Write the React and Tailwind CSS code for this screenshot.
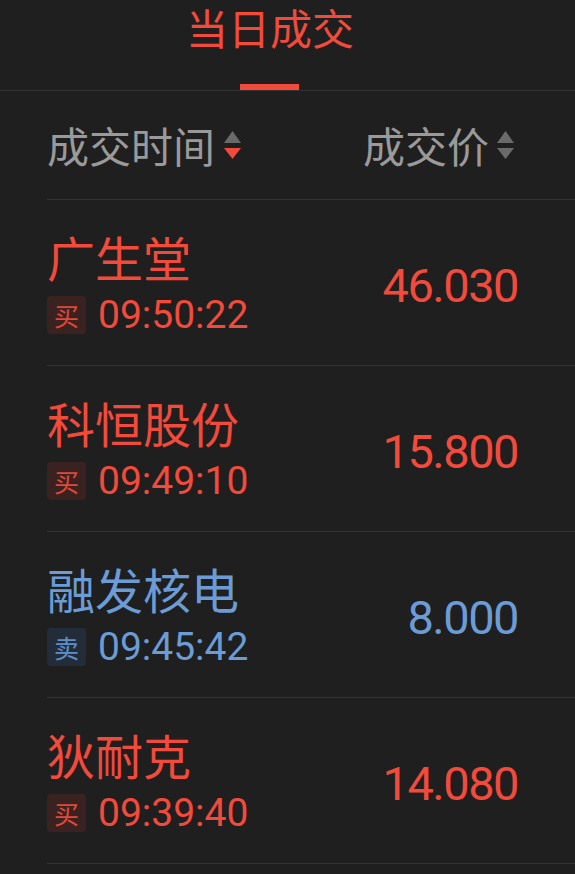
import React from "react";

const CJK = { fontFamily: '"Noto Sans CJK SC", "Noto Sans", sans-serif' };
const NUM = { fontFamily: 'Roboto, "Noto Sans", sans-serif' };

const rows = [
  { name: "广生堂", side: "买", time: "09:50:22", price: "46.030", up: true },
  { name: "科恒股份", side: "买", time: "09:49:10", price: "15.800", up: true },
  { name: "融发核电", side: "卖", time: "09:45:42", price: "8.000", up: false },
  { name: "狄耐克", side: "买", time: "09:39:40", price: "14.080", up: true },
];

function SortIcon({ active }) {
  return (
    <svg width="17" height="29" viewBox="0 0 17 29" className="shrink-0">
      <polygon points="8.5,0 17,12 0,12" fill="#6a6a6a" />
      <polygon points="0,17 17,17 8.5,28" fill={active ? "#f24a3b" : "#6a6a6a"} />
    </svg>
  );
}

export default function App() {
  return (
    <div className="w-[575px] h-[874px] bg-[#1f1f1f] overflow-hidden" style={CJK}>
      {/* Tab bar */}
      <div className="h-[91px] border-b border-[#333333] flex justify-center pr-[35px]">
        <div className="flex flex-col items-center">
          <div className="text-[42px] leading-[48px] mt-[3px] text-[#f24a3b]">当日成交</div>
          <div className="mt-auto w-[59px] h-[6px] bg-[#f24a3b]" />
        </div>
      </div>

      <div className="ml-[47px]">
        {/* Header */}
        <div className="h-[109px] border-b border-[#333333] flex items-center justify-between pr-[61px]">
          <div className="flex items-center gap-[9px]">
            <span className="text-[42px] leading-[52px] text-[#9a9a9a]">成交时间</span>
            <SortIcon active />
          </div>
          <div className="flex items-center gap-[8px]">
            <span className="text-[42px] leading-[52px] text-[#9a9a9a]">成交价</span>
            <SortIcon />
          </div>
        </div>

        {rows.map((r, i) => {
          const color = r.up ? "text-[#f24a3b]" : "text-[#6b9cd6]";
          const badgeBg = r.up ? "bg-[#3a2220]" : "bg-[#232d39]";
          const badgeText = r.up ? "text-[#e2483a]" : "text-[#5f8fc8]";
          return (
            <div
              key={i}
              className="h-[166px] border-b border-[#333333] flex items-center justify-between pr-[57px]"
            >
              <div className="flex flex-col">
                <div className={`text-[48px] leading-[52px] ${color}`}>{r.name}</div>
                <div className="flex items-center gap-[12px] mt-[13px]">
                  <div
                    className={`w-[39px] h-[38px] rounded-[4px] flex items-center justify-center text-[25px] leading-none ${badgeBg} ${badgeText}`}
                  >
                    {r.side}
                  </div>
                  <div className={`text-[39px] leading-[40px] ${color}`} style={NUM}>
                    {r.time}
                  </div>
                </div>
              </div>
              <div
                className={`text-[47px] leading-[52px] mt-[6px] tracking-[-1.5px] ${color}`}
                style={NUM}
              >
                {r.price}
              </div>
            </div>
          );
        })}
      </div>
    </div>
  );
}
